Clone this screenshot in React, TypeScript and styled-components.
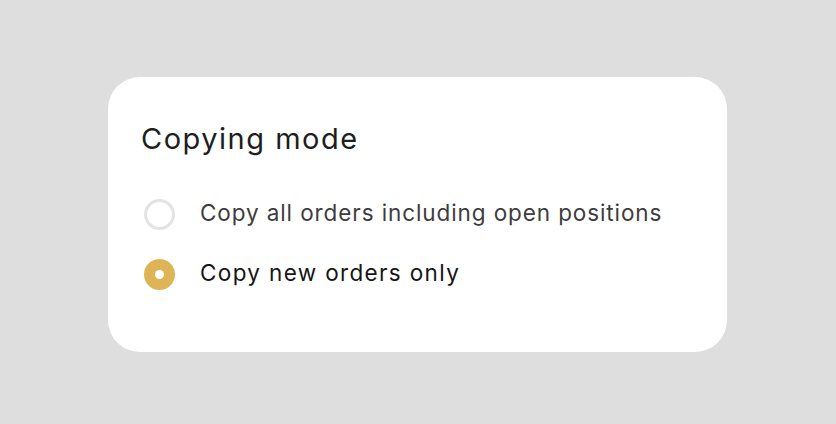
import React, { useState } from "react";
import styled, { createGlobalStyle } from "styled-components";

const Global = createGlobalStyle`
  html, body { margin: 0; padding: 0; }
  body { background: #dedede; font-family: Inter, "Noto Sans", sans-serif; }
`;

const Page = styled.div`
  width: 836px;
  height: 424px;
  display: flex;
  align-items: flex-start;
  padding: 77px 0 0 108px;
  box-sizing: border-box;
`;

const Card = styled.div`
  width: 619px;
  height: 275px;
  box-sizing: border-box;
  background: #ffffff;
  border-radius: 32px;
  padding: 45px 32px 0 33px;
  display: flex;
  flex-direction: column;
`;

const Title = styled.h2`
  margin: 0;
  font-size: 29px;
  line-height: 34px;
  font-weight: 400;
  color: #1e1e1e;
  letter-spacing: 1.5px;
`;

const Options = styled.div`
  display: flex;
  flex-direction: column;
  gap: 28px;
  margin-top: 42px;
  padding-left: 3px;
`;

const Option = styled.label`
  display: flex;
  align-items: center;
  gap: 25px;
  height: 32px;
  cursor: pointer;
`;

const Circle = styled.span<{ $checked: boolean }>`
  width: 31px;
  height: 31px;
  box-sizing: border-box;
  border-radius: 50%;
  flex-shrink: 0;
  display: flex;
  align-items: center;
  justify-content: center;
  border: ${(p) => (p.$checked ? "none" : "3px solid #e3e3e3")};
  background: ${(p) => (p.$checked ? "#dfb457" : "#fff")};
  &::after {
    content: "";
    display: ${(p) => (p.$checked ? "block" : "none")};
    width: 9px;
    height: 9px;
    border-radius: 50%;
    background: #fff;
  }
`;

const Label = styled.span<{ $checked: boolean }>`
  font-size: 22.5px;
  line-height: 26px;
  padding-bottom: 2px;
  font-weight: 400;
  color: ${(p) => (p.$checked ? "#161616" : "#3d3d3d")};
  letter-spacing: ${(p) => (p.$checked ? "1.35px" : "0.9px")};
`;

const options = [
  "Copy all orders including open positions",
  "Copy new orders only",
];

export default function App() {
  const [sel, setSel] = useState(1);
  return (
    <>
      <Global />
      <Page>
        <Card>
          <Title>Copying mode</Title>
          <Options>
            {options.map((o, i) => (
              <Option key={o} onClick={() => setSel(i)}>
                <Circle $checked={sel === i} />
                <Label $checked={sel === i}>{o}</Label>
              </Option>
            ))}
          </Options>
        </Card>
      </Page>
    </>
  );
}
